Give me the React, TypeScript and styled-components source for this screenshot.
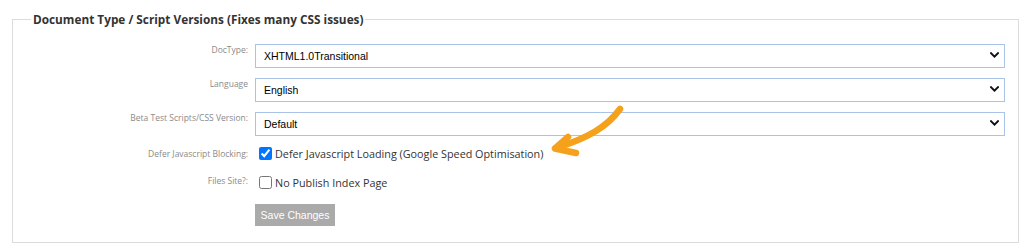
import React from "react";
import styled, { createGlobalStyle } from "styled-components";

const GlobalStyle = createGlobalStyle`
  html, body { margin: 0; padding: 0; background: #ffffff; }
  body { font-family: "Open Sans", "Liberation Sans", sans-serif; }
`;

const Page = styled.div`
  position: relative;
  width: 1030px;
  height: 252px;
  padding: 10px 0 0 12px;
  box-sizing: border-box;
`;

const Fieldset = styled.fieldset`
  margin: 0;
  width: 1007px;
  box-sizing: border-box;
  border: 1px solid #dcdcdc;
  padding: 15px 12px 16px 0;
  min-inline-size: 0;
`;

const Legend = styled.legend`
  margin-left: 18px;
  padding: 0 2px;
  font-family: "Open Sans", sans-serif;
  font-weight: 700;
  font-size: 11.8px;
  line-height: 18px;
  color: #333333;
`;

const Form = styled.div`
  display: grid;
  grid-template-columns: 235px 750px;
  column-gap: 7px;
  row-gap: 10px;
`;

const Label = styled.div<{ $top: number }>`
  text-align: right;
  font-family: "Open Sans", sans-serif;
  font-size: 8.5px;
  line-height: 12px;
  color: #8a8a8a;
  padding-top: ${(p) => p.$top}px;
`;

const SelectWrap = styled.div`
  position: relative;
  height: 24px;
`;

const Select = styled.select`
  appearance: none;
  -webkit-appearance: none;
  width: 100%;
  height: 24px;
  box-sizing: border-box;
  margin: 0;
  border: 1px solid #aac3e8;
  border-radius: 0;
  background: #ffffff;
  padding: 0 24px 0 8px;
  font-family: "Liberation Sans", Arial, sans-serif;
  font-size: 10.5px;
  color: #000000;
  outline: none;
`;

const Chevron = styled.svg`
  position: absolute;
  right: 6px;
  top: 9px;
  width: 9px;
  height: 6px;
  pointer-events: none;
`;

const CheckRow = styled.label<{ $shift: number }>`
  display: flex;
  align-items: center;
  height: 19px;
  margin-top: ${(p) => p.$shift}px;
  font-family: "Open Sans", sans-serif;
  font-size: 10.8px;
  color: #333333;
`;

const Check = styled.input`
  width: 13px;
  height: 13px;
  margin: 3px 3px 3px 4px;
`;

const Button = styled.button`
  width: 80px;
  height: 22px;
  border: none;
  border-radius: 0;
  background: #aaaaaa;
  color: #ffffff;
  font-family: "Liberation Sans", Arial, sans-serif;
  font-size: 10.5px;
  padding: 0;
`;

const Arrow = styled.svg`
  position: absolute;
  left: 545px;
  top: 100px;
  width: 85px;
  height: 62px;
  overflow: visible;
`;

const ChevronIcon = () => (
  <Chevron viewBox="0 0 9 6">
    <path d="M1 1.2 L4.5 4.6 L8 1.2" fill="none" stroke="#111" strokeWidth="2" strokeLinecap="square" />
  </Chevron>
);

const SelectField = ({ value }: { value: string }) => (
  <SelectWrap>
    <Select defaultValue={value}>
      <option>{value}</option>
    </Select>
    <ChevronIcon />
  </SelectWrap>
);

export default function App() {
  return (
    <>
      <GlobalStyle />
      <Page>
        <Fieldset>
          <Legend>Document Type / Script Versions (Fixes many CSS issues)</Legend>
          <Form>
            <Label $top={1}>DocType:</Label>
            <SelectField value="XHTML1.0Transitional" />

            <Label $top={1}>Language</Label>
            <SelectField value="English" />

            <Label $top={1}>Beta Test Scripts/CSS Version:</Label>
            <SelectField value="Default" />

            <Label $top={3}>Defer Javascript Blocking:</Label>
            <CheckRow $shift={-1}>
              <Check type="checkbox" defaultChecked />
              Defer Javascript Loading (Google Speed Optimisation)
            </CheckRow>

            <Label $top={2}>Files Site?:</Label>
            <CheckRow $shift={0}>
              <Check type="checkbox" />
              No Publish Index Page
            </CheckRow>

            <div />
            <div>
              <Button type="button">Save Changes</Button>
            </div>
          </Form>
        </Fieldset>
        <Arrow viewBox="545 100 85 62">
          <path
            d="M620 109 C 607 127 588 138 556 148"
            fill="none"
            stroke="#f6a11b"
            strokeWidth="6.5"
            strokeLinecap="round"
          />
          <path
            d="M568 137 L555 148.5 L576 153"
            fill="none"
            stroke="#f6a11b"
            strokeWidth="6.5"
            strokeLinecap="round"
            strokeLinejoin="round"
          />
        </Arrow>
      </Page>
    </>
  );
}
